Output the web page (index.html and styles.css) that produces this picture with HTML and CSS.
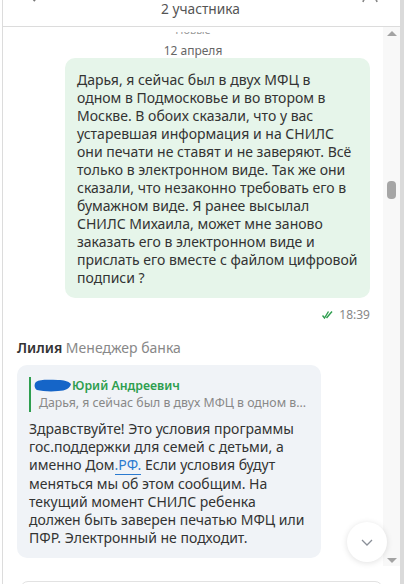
FILE: index.html
```html
<!DOCTYPE html>
<html lang="ru">
<head>
<meta charset="UTF-8">
<meta name="viewport" content="width=device-width, initial-scale=1.0">
<title>Чат</title>
<link rel="stylesheet" href="styles.css">
</head>
<body>
<div class="frame">
    <header class="header">
        <svg class="hdr-icon back" width="14" height="20" viewBox="0 0 14 20"><path d="M10 2 L3 10 L10 18" fill="none" stroke="#777" stroke-width="2"/></svg>
        <div class="hdr-title">
            <div class="hdr-name">Чат с банком</div>
            <div class="hdr-sub">2 участника</div>
        </div>
        <svg class="hdr-icon people" width="16" height="20" viewBox="0 0 16 20"><circle cx="8" cy="7" r="4" fill="none" stroke="#888" stroke-width="1.6"/><path d="M1 19 C2 13 14 13 15 19" fill="none" stroke="#888" stroke-width="1.6"/></svg>
    </header>
    <div class="body">
        <div class="chat">
            <div class="date-cut"><span>Новые</span></div>
            <div class="date">12 апреля</div>

            <div class="msg-out">
                <div class="bubble out">Дарья, я сейчас был в двух МФЦ в одном в Подмосковье и во втором в Москве. В обоих сказали, что у вас устаревшая информация и на СНИЛС они печати не ставят и не заверяют. Всё только в электронном виде. Так же они сказали, что незаконно требовать его в бумажном виде. Я ранее высылал СНИЛС Михаила, может мне заново заказать его в электронном виде и прислать его вместе с файлом цифровой подписи ?</div>
                <div class="meta">
                    <svg width="11" height="8" viewBox="0 0 11 8"><path d="M0.5 4.5 L2.5 7 L6.5 0.5 M4.5 7 L10 0.5" fill="none" stroke="#2e9e4f" stroke-width="1.4"/></svg>
                    <span>18:39</span>
                </div>
            </div>

            <div class="msg-in">
                <div class="author"><b>Лилия</b> Менеджер банка</div>
                <div class="bubble in">
                    <div class="quote">
                        <div class="quote-head">
                            <svg class="blot" width="38" height="13" viewBox="0 0 38 13"><path d="M2 3 C6 0 16 1 24 1 C30 1 34 2 37 5 C36 9 32 12 24 12 C16 13 8 12 3 11 C0 9 0 5 2 3 Z" fill="#1565c8"/></svg>
                            <span class="quote-name">Юрий Андреевич</span>
                        </div>
                        <div class="quote-text">Дарья, я сейчас был в двух МФЦ в одном в...</div>
                    </div>
                    <div class="text">Здравствуйте! Это условия программы гос.поддержки для семей с детьми, а именно Дом<a href="#">.РФ.</a> Если условия будут меняться мы об этом сообщим. На текущий момент СНИЛС ребенка должен быть заверен печатью МФЦ или ПФР. Электронный не подходит.</div>
                </div>
            </div>
        </div>
        <div class="scrollbar">
            <div class="arrow up"></div>
            <div class="thumb"></div>
            <div class="arrow down"></div>
        </div>
        <button class="scroll-down"><svg width="12" height="7" viewBox="0 0 12 7"><path d="M1 1 L6 6 L11 1" fill="none" stroke="#8a8f98" stroke-width="1.3"/></svg></button>
    </div>
    <div class="composer">
        <div class="input"></div>
    </div>
</div>
</body>
</html>
```

FILE: styles.css
```css
body {
    margin: 0;
    font-family: 'Noto Sans', 'Open Sans', sans-serif;
    background: #fff;
    color: #333;
}
.frame {
    height: 584px;
    display: flex;
    flex-direction: column;
    border-left: 1px solid #dcdcdc;
    border-right: 4px solid #dadada;
    margin-left: 2px;
    overflow: hidden;
}
.header {
    height: 46px;
    margin-top: -20px;
    display: flex;
    align-items: flex-start;
    justify-content: space-between;
    border-bottom: 1px solid #dcdcdc;
    flex-shrink: 0;
}
.hdr-icon {
    margin-top: 3px;
}
.back {
    margin-left: 22px;
}
.people {
    margin-right: 22px;
}
.hdr-title {
    text-align: center;
    line-height: 18px;
}
.hdr-name {
    font-size: 14px;
    font-weight: 600;
    height: 20px;
}
.hdr-sub {
    font-size: 13.75px;
    color: #555;
}
.body {
    flex: 1;
    display: flex;
    min-height: 0;
    position: relative;
}
.chat {
    flex: 1;
    overflow: hidden;
}
.scrollbar {
    width: 17px;
    background: #f8f8f8;
    display: flex;
    flex-direction: column;
    align-items: center;
}
.arrow {
    width: 0;
    height: 0;
    border-left: 5px solid transparent;
    border-right: 5px solid transparent;
}
.arrow.up {
    border-bottom: 5px solid #a3a3a3;
    margin-top: 4px;
}
.arrow.down {
    border-top: 5px solid #a3a3a3;
    margin-top: auto;
    margin-bottom: 3px;
}
.thumb {
    width: 9px;
    height: 18px;
    border-radius: 4px;
    background: #a6a6a6;
    margin-top: 145px;
}
.date-cut {
    height: 2px;
    margin-top: 5px;
    overflow: hidden;
    text-align: center;
}
.date-cut span {
    display: block;
    margin-top: -7px;
    font-size: 11px;
    line-height: 10px;
    color: #999;
}
.date {
    text-align: center;
    font-size: 12px;
    color: #666;
    line-height: 14px;
    margin-top: 10px;
}
.msg-out {
    display: flex;
    flex-direction: column;
    align-items: flex-end;
    padding-right: 13px;
}
.bubble {
    border-radius: 10px;
    font-size: 14px;
    line-height: 18px;
    color: #333;
}
.bubble.out {
    width: 281px;
    background: #e6f5ea;
    padding: 13px 12px 11px 12px;
}
.meta {
    display: flex;
    align-items: center;
    gap: 6px;
    font-size: 12px;
    line-height: 14px;
    color: #888;
    margin-top: 10px;
}
.msg-in {
    margin-top: 17px;
    padding-left: 14px;
}
.author {
    font-size: 14px;
    color: #888;
    line-height: 18px;
}
.author b {
    color: #333;
    font-weight: 600;
}
.bubble.in {
    width: 280px;
    background: #f0f3f7;
    padding: 12px 12px 11px 12px;
    margin-top: 8px;
}
.quote {
    border-left: 2px solid #2e9e4f;
    padding-left: 8px;
    font-size: 12.3px;
    line-height: 17px;
}
.quote-head {
    display: flex;
    align-items: center;
    margin-left: -5px;
}
.quote-name {
    color: #2e9e4f;
    font-weight: 600;
}
.quote-text {
    color: #888;
    white-space: nowrap;
    line-height: 18px;
}
.text {
    margin-top: 8px;
    line-height: 18.2px;
}
.text a {
    color: #2a7ad0;
    text-decoration: none;
    border-bottom: 1px solid #2a7ad0;
}
.scroll-down {
    position: absolute;
    right: 13px;
    bottom: 4px;
    width: 40px;
    height: 40px;
    border-radius: 50%;
    border: none;
    background: #fff;
    box-shadow: 0 1px 6px rgba(0,0,0,0.12);
    display: flex;
    align-items: center;
    justify-content: center;
    padding: 0;
}
.composer {
    height: 18px;
    box-sizing: border-box;
    flex-shrink: 0;
    padding: 15px 17px 0 17px;
}
.input {
    height: 20px;
    border: 1px solid #e2e2e2;
    border-radius: 8px;
}
```
